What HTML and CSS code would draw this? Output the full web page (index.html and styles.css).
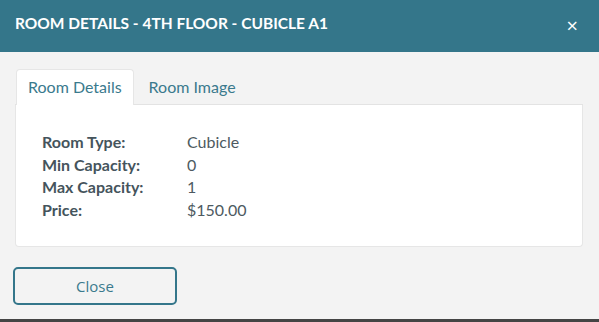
FILE: index.html
```html
<!DOCTYPE html>
<html lang="en">
<head>
    <meta charset="UTF-8">
    <title>Room Details</title>
    <link rel="stylesheet" href="styles.css">
</head>
<body>
    <div class="rd_modal">
        <div class="rd_modal-header">
            <span class="rd_modal-title">ROOM DETAILS - 4TH FLOOR - CUBICLE A1</span>
            <span class="rd_modal-close">&times;</span>
        </div>

        <div class="rd_modal-body">
            <ul class="rd_tabs">
                <li class="rd_tab rd_tab-active">Room Details</li>
                <li class="rd_tab">Room Image</li>
            </ul>
            <div class="rd_tab-content">
                <dl class="rd_info">
                    <dt>Room Type:</dt><dd>Cubicle</dd>
                    <dt>Min Capacity:</dt><dd>0</dd>
                    <dt>Max Capacity:</dt><dd>1</dd>
                    <dt>Price:</dt><dd>$150.00</dd>
                </dl>
            </div>
        </div>

        <div class="rd_modal-footer">
            <button class="rd_btn">Close</button>
        </div>
    </div>
</body>
</html>
```

FILE: styles.css
```css
html, body{ margin: 0; padding: 0; background: #444;}
body{ font-family: Lato, "Liberation Sans", sans-serif; -webkit-font-smoothing: antialiased;}

.rd_modal{ width: 599px; height: 319px; background: #f3f3f3; display: flex; flex-direction: column;}

.rd_modal-header{ height: 52px; box-sizing: border-box; padding: 0 21px 0 15px; background: #34768a; color: #fff; display: flex; align-items: center; justify-content: space-between;}
.rd_modal-title{ font-size: 15.5px; font-weight: 700; margin-top: -7px;}
.rd_modal-close{ font-family: "Open Sans", sans-serif; font-size: 20px; font-weight: 400; line-height: 1;}

.rd_modal-body{ padding: 17px 16px 0 15px;}
.rd_tabs{ list-style: none; margin: 0; padding: 0 0 0 1px; display: flex; border-bottom: 1px solid #e3e3e3;}
.rd_tab{ height: 35px; box-sizing: border-box; padding: 0 11px; font-size: 16px; color: #3a7a8d; line-height: 34px; border: 1px solid transparent; border-bottom: 0; border-radius: 4px 4px 0 0;}
.rd_tab + .rd_tab{ padding-left: 14px;}
.rd_tab-active{ background: #fff; border-color: #e6e6e6; margin-bottom: -1px; height: 36px;}

.rd_tab-content{ background: #fff; border: 1px solid #e6e6e6; border-top: 0; border-radius: 0 0 4px 4px; padding: 26px 26px 25px;}
.rd_info{ margin: 0; display: grid; grid-template-columns: 145px auto; font-size: 16px; line-height: 22.6px; color: #45545c;}
.rd_info dt{ font-weight: 700;}
.rd_info dd{ margin: 0; color: #4d5a61;}

.rd_modal-footer{ padding: 20px 0 0 13px;}
.rd_btn{ display: block; width: 164px; height: 38px; box-sizing: border-box; background: #f3f3f3; border: 2px solid #34768a; border-radius: 5px; color: #3a7a8d; font-family: "Open Sans", sans-serif; font-size: 15px; padding: 0; cursor: pointer;}
```
